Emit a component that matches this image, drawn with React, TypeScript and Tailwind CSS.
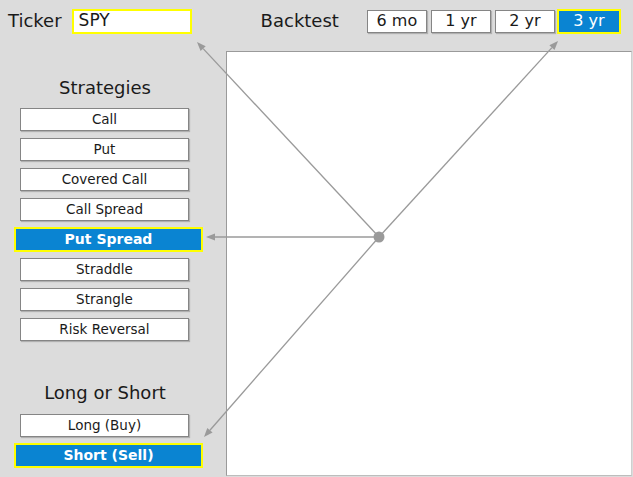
import React from "react";

const font = { fontFamily: '"DejaVu Sans", Verdana, sans-serif' };

const strategies = [
  "Call",
  "Put",
  "Covered Call",
  "Call Spread",
  "Put Spread",
  "Straddle",
  "Strangle",
  "Risk Reversal",
];

function SideButton({ label, selected }: { label: string; selected?: boolean }) {
  if (selected) {
    return (
      <div className="ml-[14px] -my-[1px] flex h-[25px] w-[189px] items-center justify-center border-2 border-[#ffff00] bg-[#0a84d2] text-[14px] font-bold text-white">
        {label}
      </div>
    );
  }
  return (
    <div className="ml-[20px] flex h-[23px] w-[169px] items-center justify-center border border-[#858585] bg-white text-[13.5px] text-[#1a1a1a] shadow-[1px_1px_1px_rgba(0,0,0,0.2)]">
      {label}
    </div>
  );
}

function PeriodButton({ label, selected }: { label: string; selected?: boolean }) {
  if (selected) {
    return (
      <div className="-ml-[2px] flex h-[25px] w-[64px] items-center justify-center border-2 border-[#ffff00] bg-[#0a84d2] text-[16px] text-white">
        {label}
      </div>
    );
  }
  return (
    <div className="flex h-[23px] w-[60px] items-center justify-center border border-[#858585] bg-white text-[16px] text-[#1a1a1a] shadow-[1px_1px_1px_rgba(0,0,0,0.2)]">
      {label}
    </div>
  );
}

const center = { x: 379, y: 237 };
const ends = [
  { x: 197, y: 42 },
  { x: 558, y: 41 },
  { x: 206, y: 237 },
  { x: 204, y: 437 },
];

function Arrow({ x, y }: { x: number; y: number }) {
  const dx = x - center.x;
  const dy = y - center.y;
  const len = Math.hypot(dx, dy);
  const ux = dx / len;
  const uy = dy / len;
  const hl = 9;
  const hw = 3.5;
  const bx = x - ux * hl;
  const by = y - uy * hl;
  const px = -uy;
  const py = ux;
  const pts = `${x},${y} ${bx + px * hw},${by + py * hw} ${bx - px * hw},${by - py * hw}`;
  return (
    <g>
      <line x1={center.x} y1={center.y} x2={bx} y2={by} stroke="#9a9a9a" strokeWidth={1.3} />
      <polygon points={pts} fill="#9a9a9a" />
    </g>
  );
}

export default function App() {
  return (
    <div className="relative flex h-[477px] w-[633px] flex-col overflow-hidden bg-[#dcdcdc] text-[#1a1a1a]" style={font}>
      <div className="flex h-[51px] items-start pt-[8px]">
        <div className="flex h-[26px] items-center">
          <span className="ml-[8px] text-[18px] leading-[22px]">Ticker</span>
          <div className="ml-[10px] flex h-[25px] w-[120px] items-center border-2 border-[#ffff00] bg-white pl-[5px] text-[17px]">
            SPY
          </div>
          <span className="ml-[69px] text-[18px] leading-[22px]">Backtest</span>
          <div className="ml-[28px] flex items-center gap-[4px]">
            <PeriodButton label="6 mo" />
            <PeriodButton label="1 yr" />
            <PeriodButton label="2 yr" />
            <PeriodButton label="3 yr" selected />
          </div>
        </div>
      </div>
      <div className="flex flex-1">
        <div className="flex w-[226px] flex-col">
          <div className="w-[210px] pt-[26px] text-center text-[18px] leading-[22px]">Strategies</div>
          <div className="mt-[9px] flex flex-col gap-[7px]">
            {strategies.map((s) => (
              <SideButton key={s} label={s} selected={s === "Put Spread"} />
            ))}
          </div>
          <div className="mt-[41px] w-[210px] text-center text-[18px] leading-[22px]">Long or Short</div>
          <div className="mt-[10px] flex flex-col gap-[7px]">
            <SideButton label="Long (Buy)" />
            <SideButton label="Short (Sell)" selected />
          </div>
        </div>
        <div className="mb-[1px] mr-[1px] flex-1 border-t border-l border-r border-b border-t-[#9a9a9a] border-l-[#9a9a9a] border-r-[#cfcfcf] border-b-[#bdbdbd] bg-white" />
      </div>
      <svg className="pointer-events-none absolute left-0 top-0" width={633} height={477}>
        {ends.map((e, i) => (
          <Arrow key={i} x={e.x} y={e.y} />
        ))}
        <circle cx={center.x} cy={center.y} r={5.5} fill="#9a9a9a" />
      </svg>
    </div>
  );
}
